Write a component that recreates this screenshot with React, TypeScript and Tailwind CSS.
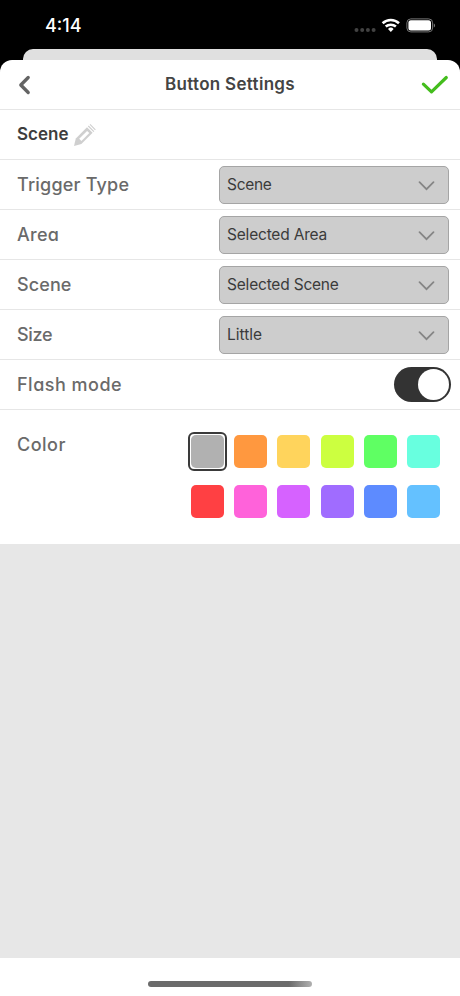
import type { ReactNode } from "react";

/* ── Data ──────────────────────────────────────────────────── */

interface SelectField {
  label: string;
  value: string;
  labelClass: string;
  valueClass: string;
}

const FIELDS: SelectField[] = [
  { label: "Trigger Type", value: "Scene", labelClass: "tracking-[0.2px]", valueClass: "tracking-[-0.3px]" },
  { label: "Area", value: "Selected Area", labelClass: "tracking-[0.3px]", valueClass: "tracking-[-0.2px]" },
  { label: "Scene", value: "Selected Scene", labelClass: "tracking-[0.1px]", valueClass: "tracking-[-0.2px]" },
  { label: "Size", value: "Little", labelClass: "tracking-[-0.3px]", valueClass: "tracking-normal" },
];

const COLORS = [
  "bg-[#b1b1b1]", "bg-[#ff983f]", "bg-[#ffd45c]", "bg-[#ccff40]", "bg-[#5fff63]", "bg-[#68ffdf]",
  "bg-[#ff4043]", "bg-[#ff62da]", "bg-[#d662ff]", "bg-[#a06cff]", "bg-[#5d8bff]", "bg-[#64c1ff]",
];

/* ── Status bar ────────────────────────────────────────────── */

function StatusBar() {
  return (
    <div className="flex h-[49px] items-start justify-between pl-[45px] pr-[24px] pt-[14px]">
      <span className="text-[18px] leading-6 font-medium text-white">4:14</span>
      <svg width="82" height="22" viewBox="0 0 82 22">
        <g fill="#424242">
          <circle cx="2.5" cy="16" r="2" />
          <circle cx="8.2" cy="16" r="2" />
          <circle cx="13.9" cy="16" r="2" />
          <circle cx="19.6" cy="16" r="2" />
        </g>
        <g fill="none" stroke="#fff" strokeWidth="2.6">
          <path d="M28.6 9.2a12.2 12.2 0 0 1 16.4 0" />
          <path d="M31.7 12.6a7.8 7.8 0 0 1 10.2 0" />
        </g>
        <path d="M36.8 17.9l-2.8-3a4 4 0 0 1 5.6 0z" fill="#fff" />
        <rect x="52.9" y="4.9" width="25.7" height="13" rx="3.9" fill="none" stroke="#777" />
        <rect x="54.4" y="6.3" width="22.6" height="10.2" rx="2.5" fill="#fff" />
        <path d="M79.8 9.4c1.7.7 1.7 3.3 0 4z" fill="#777" />
      </svg>
    </div>
  );
}

/* ── Rows ──────────────────────────────────────────────────── */

function Row({ children }: { children: ReactNode }) {
  return (
    <div className="flex h-[50px] items-center justify-between border-b border-[#e6e6e6] pl-[17px] pr-[11px]">
      {children}
    </div>
  );
}

function Pencil() {
  return (
    <svg width="23" height="23" viewBox="0 0 23 23" className="ml-[5px] mt-[2px]">
      <path d="M1 22l1.8-7.6L14 3.2l5.6 5.6L8.4 20z" fill="#cfcfcf" />
      <path d="M6.2 14.8l7.9-7.9 2.2 2.2L8.4 17z" fill="#fff" />
      <path d="M15.3 2l5.6 5.6M17 .4l5.4 5.4" stroke="#cfcfcf" strokeWidth="1.1" />
    </svg>
  );
}

function SelectBox({ value, className }: { value: string; className: string }) {
  return (
    <button className="flex h-[38px] w-[230px] items-center justify-between rounded-[5px] border border-[#a5a5a5] bg-[#cdcdcd] pl-[7px] pr-[13px] [font-feature-settings:normal]">
      <span className={`text-[15.5px] leading-5 text-[#3b3b3b] ${className}`}>{value}</span>
      <svg width="17" height="10" viewBox="0 0 17 10" className="mt-[2px]">
        <path d="M1.5 1.2l7 7 7-7" fill="none" stroke="#858585" strokeWidth="1.7" strokeLinecap="round" />
      </svg>
    </button>
  );
}

function Swatch({ color, selected }: { color: string; selected: boolean }) {
  return (
    <button
      className={`flex size-[39px] items-center justify-center rounded-[6px] border-2 ${
        selected ? "border-[#3a3a3a]" : "border-transparent"
      }`}
    >
      <span className={`size-[33px] shrink-0 rounded-[5px] ${color}`} />
    </button>
  );
}

/* ── Screen ────────────────────────────────────────────────── */

export default function App() {
  return (
    <div className="flex h-[996px] w-[460px] flex-col overflow-hidden bg-black font-['Inter',sans-serif]">
      <StatusBar />
      <div className="mx-[23px] h-[11px] shrink-0 rounded-t-[10px] bg-[#e0e0e0]" />

      <div className="flex flex-1 flex-col bg-[linear-gradient(#000_20px,#fff_20px)]">
        <div className="rounded-t-[12px] bg-white [font-feature-settings:'cv11']">
          <header className="flex h-[50px] items-center justify-between border-b border-[#e6e6e6] pl-[11px] pr-[11px]">
            <svg width="28" height="20" viewBox="-7 0 28 20">
              <path d="M10.2 2.5L2.8 10l7.4 7.5" fill="none" stroke="#646464" strokeWidth="3.3" strokeLinecap="round" strokeLinejoin="round" />
            </svg>
            <h1 className="text-[17px] font-semibold tracking-[0.3px] text-[#444]">Button Settings</h1>
            <svg width="28" height="20" viewBox="0 0 28 20">
              <path d="M2.4 9.2l8.1 7.7L25.3 2.5" fill="none" stroke="#44bd1d" strokeWidth="3.2" strokeLinecap="round" strokeLinejoin="round" />
            </svg>
          </header>

          <Row>
            <div className="flex items-center">
              <span className="text-[17px] font-semibold text-[#3d3d3d]">Scene</span>
              <Pencil />
            </div>
          </Row>

          {FIELDS.map((f) => (
            <Row key={f.label}>
              <span className={`text-[18px] font-[450] text-[#6a6a6a] ${f.labelClass}`}>{f.label}</span>
              <SelectBox value={f.value} className={f.valueClass} />
            </Row>
          ))}

          <div className="flex h-[50px] items-center justify-between border-b border-[#e6e6e6] pl-[17px] pr-[9px]">
            <span className="text-[18px] font-[450] tracking-[0.5px] text-[#6a6a6a]">Flash mode</span>
            <button className="flex h-[35px] w-[57px] items-center justify-end rounded-full bg-[#333] pr-[2px]">
              <span className="size-[31px] rounded-full bg-white" />
            </button>
          </div>

          <div className="flex h-[134px] justify-between pl-[17px] pr-[17px]">
            <span className="mt-[21px] text-[18px] font-[450] tracking-[0.5px] text-[#6a6a6a]">Color</span>
            <div className="mt-[22px] grid w-[255px] grid-cols-[repeat(6,39px)] content-start justify-between gap-y-[11px]">
              {COLORS.map((color, i) => (
                <Swatch key={color} color={color} selected={i === 0} />
              ))}
            </div>
          </div>
        </div>

        <div className="flex-1 bg-[#e7e7e7]" />

        <div className="flex h-[38px] justify-center bg-white pt-[23px]">
          <div className="h-[6px] w-[164px] rounded-full bg-[linear-gradient(90deg,#6b6b6b_86%,#b0b0b0)]" />
        </div>
      </div>
    </div>
  );
}
